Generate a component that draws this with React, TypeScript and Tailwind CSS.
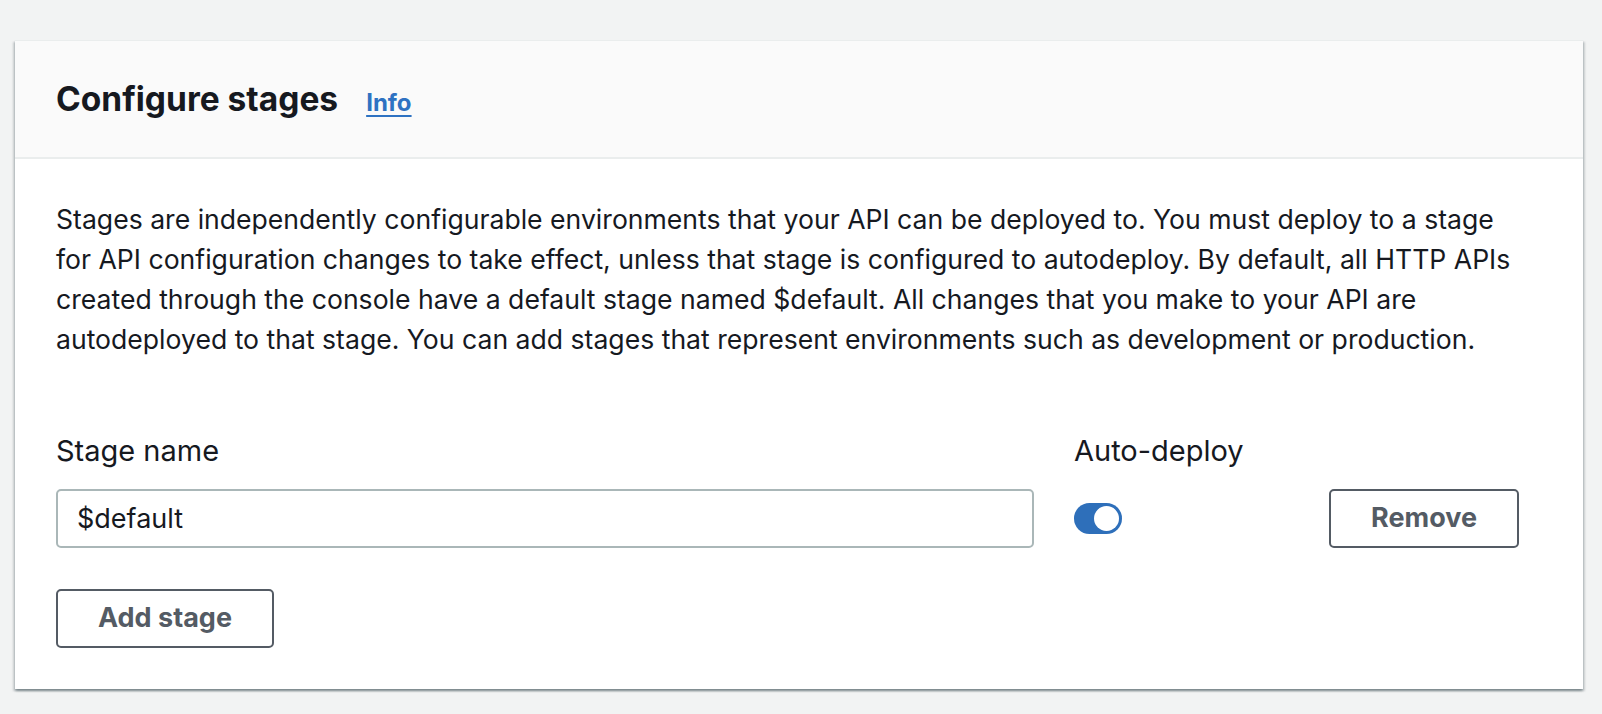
import React from "react";

const font = { fontFamily: "Inter, 'Liberation Sans', sans-serif" };

function Toggle({ checked = true }: { checked?: boolean }) {
  return (
    <div
      className={`relative w-[48px] h-[31px] rounded-full ${
        checked ? "bg-[#2e6fba]" : "bg-[#879596]"
      }`}
    >
      <span
        className={`absolute top-[3px] w-[25px] h-[25px] rounded-full bg-white ${
          checked ? "right-[3px]" : "left-[3px]"
        }`}
      />
    </div>
  );
}

function Button({ children, className = "" }: { children: React.ReactNode; className?: string }) {
  return (
    <button
      className={`h-[59px] rounded-[5px] border-2 border-[#545b64] bg-white text-[27px] font-bold text-[#545b64] ${className}`}
    >
      {children}
    </button>
  );
}

export default function App() {
  return (
    <div className="min-h-screen bg-[#f2f3f3] pt-[40px] pl-[15px] pr-[19px]" style={font}>
      <div className="w-[1568px] bg-white border-t border-[#eaeded] shadow-[0_2px_2px_0_rgba(0,28,36,0.3),2px_2px_2px_0_rgba(0,28,36,0.15),-2px_2px_2px_0_rgba(0,28,36,0.15)]">
        <div className="bg-[#fafafa] border-b-2 border-[#eaeded] px-[41px] pt-[38px] pb-[36px] flex items-baseline gap-[28px]">
          <h2 className="text-[33.5px] leading-[40px] font-bold text-[#16191f]">Configure stages</h2>
          <a href="#" className="text-[24px] font-bold text-[#2e72c2] underline underline-offset-4">
            Info
          </a>
        </div>

        <div className="px-[41px] pt-[40px] pb-[41px] text-[#16191f]">
          <p className="text-[26.6px] leading-[40px]">
            Stages are independently configurable environments that your API can be deployed to. You must deploy to a stage
            <br />
            for API configuration changes to take effect, unless that stage is configured to autodeploy. By default, all HTTP APIs
            <br />
            created through the console have a default stage named $default. All changes that you make to your API are
            <br />
            autodeployed to that stage. You can add stages that represent environments such as development or production.
          </p>

          <div className="mt-[74px] grid grid-cols-[978px_215px_190px] gap-x-[40px]">
            <label className="text-[29px] leading-[36px]">Stage name</label>
            <label className="text-[29px] leading-[36px]">Auto-deploy</label>
            <div />

            <div className="mt-[20px]">
              <input
                readOnly
                value="$default"
                className="w-full h-[59px] rounded-[5px] border-2 border-[#aab7b8] px-[19px] text-[27px] text-[#16191f] outline-none"
                style={font}
              />
            </div>
            <div className="mt-[20px] h-[59px] flex items-center">
              <Toggle />
            </div>
            <div className="mt-[20px]">
              <Button className="w-[190px]">Remove</Button>
            </div>
          </div>

          <Button className="mt-[41px] w-[218px]">Add stage</Button>
        </div>
      </div>
    </div>
  );
}
